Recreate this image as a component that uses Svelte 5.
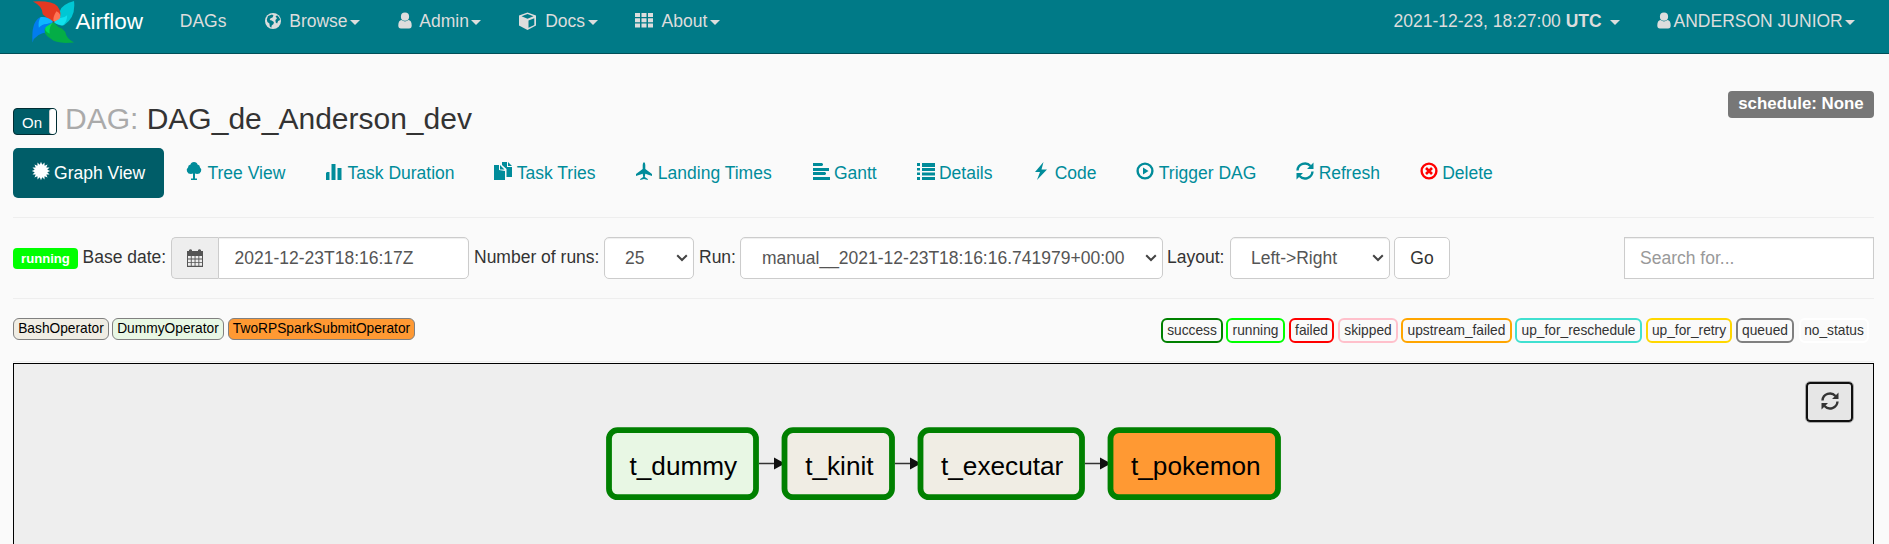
<script>
  const icons = {
    globe: '<circle cx="9" cy="9" r="8"/><path fill="#007a87" d="M4 4l4-1.500 1.500 1-1 2-2 .8-.8 1.700 2 .5 2.200 1.500-.4 2-1.800 1.500-.4 2.200-1.500-1.200-.4-3-2-1.500-.6-2.500zM11.500 4l2-.5 2 2.500.6 2-2 1-1 2.500-1.400-1-.3-2.500 1.500-1.500z"/>',
    user: '<circle cx="7" cy="4.700" r="4.100"/><path d="M3.600 8q3.400 2.800 6.800 0 3.300.2 3.300 5.500 0 3-2.600 3H2.900q-2.600 0-2.600-3 0-5.300 3.300-5.500z"/>',
    cube: '<path fill-rule="evenodd" d="M8.500.5l8.500 3v10L8.500 18 0 13.500v-10zM8.500 2L2.500 4.300l6 2.400 6-2.400zM9.500 8.500v7.300l5.800-2.900V6.200z"/>',
    th: '<path d="M0 1h5v4H0zM6.500 1h5v4h-5zM13 1h5v4h-5zM0 6.300h5v4H0zM6.500 6.300h5v4h-5zM13 6.300h5v4h-5zM0 11.600h5v4H0zM6.500 11.600h5v4h-5zM13 11.600h5v4h-5z"/>',
    tree: '<path d="M9 0q3 0 3.500 2.500Q15 3 15 5.500 17 7 16 9.500 15 12 12 12l-2-.5V16.500h2V18H6v-1.500h2v-5L6 12Q3 12 2 9.500 1 7 3 5.500 3 3 5.500 2.500 6 0 9 0z"/>',
    bars: '<path d="M1 11l1-1h2.500v8H1zM6.500 2h4v16h-4zM12.500 6h4v12h-4z"/>',
    copy: '<path d="M0 3h5v5l6 1v9H0zM6 3l4.500 4.500H6zM8 0h5v5h5v10h-5.500V7L8 3zM14 0l4 4h-4z"/>',
    plane: '<path d="M9 0q1.300 1 1.300 3v4L17 12v2l-6.700-2.300-.5 3.300 3 2v1L9 17l-3.800 1v-1l3-2-.5-3.300L1 14v-2l6.700-5V3Q7.700 1 9 0z"/>',
    gantt: '<path d="M1 1h9l1 1v1l-1 1H1zM1 6h16v3H1zM1 10h12l1 1v1l-1 1H1zM1 15h17v3H1z"/>',
    list: '<path d="M0 1h3v3H0zM5 1h13v4H5zM0 6h3v2.500H0zM5 6h13v3H5zM0 10.500h3V13H0zM5 10.500h13v3H5zM0 15h3v3H0zM5 15h13v3H5z"/>',
    flash: '<path d="M11.500 0L3 10h5L5 18l10-10.500H9.500z"/>',
    play: '<circle cx="9" cy="9" r="7.400" fill="none" stroke="currentColor" stroke-width="2.400"/><path d="M7 5.500L12.500 9 7 12.500z"/>',
    refresh: '<path fill="none" stroke="currentColor" stroke-width="2.400" d="M1.500 8.500A7.500 7.500 0 0 1 14.500 4M16.500 9.500A7.500 7.500 0 0 1 3.500 14"/><path d="M17.500.5V7H11zM.5 17.500V11H7z"/>',
    remove: '<circle cx="9" cy="9" r="7.400" fill="none" stroke="currentColor" stroke-width="2.400"/><path fill="none" stroke="currentColor" stroke-width="2.600" d="M6 6l6 6M12 6l-6 6"/>',
    calendar: '<path fill-rule="evenodd" d="M1 2h2V1q1.500-1.500 3 0v1h6V1q1.500-1.500 3 0v1h2v16H1zM2 7v2.500h2.800V7zm3.700 0v2.500h2.900V7zm3.800 0v2.500h2.900V7zm3.800 0v2.500H16V7zM2 10.400v2.500h2.800v-2.500zm3.700 0v2.500h2.900v-2.500zm3.800 0v2.500h2.900v-2.500zm3.800 0v2.500H16v-2.500zM2 13.800v3h2.800v-3zm3.700 0v3h2.900v-3zm3.800 0v3h2.900v-3zm3.800 0v3H16v-3z"/>'
  };
  const spikes = Array.from({ length: 32 }, (_, i) => {
    const r = i % 2 ? 6.4 : 9.2;
    const a = (i * Math.PI) / 16;
    return `${(9 + r * Math.sin(a)).toFixed(2)},${(9 - r * Math.cos(a)).toFixed(2)}`;
  }).join(' ');
  icons.burst = `<polygon points="${spikes}"/>`;

  const menu = [
    { label: 'Browse', icon: 'globe', w: 25.3 },
    { label: 'Admin', icon: 'user', w: 21.7 },
    { label: 'Docs', icon: 'cube', w: 26.3 },
    { label: 'About', icon: 'th', w: 26.5 }
  ];
  const tabs = [
    ['burst', 'Graph View'], ['tree', 'Tree View'], ['bars', 'Task Duration'], ['copy', 'Task Tries'],
    ['plane', 'Landing Times'], ['gantt', 'Gantt'], ['list', 'Details'], ['flash', 'Code'],
    ['play', 'Trigger DAG'], ['refresh', 'Refresh'], ['remove', 'Delete']
  ];
  const operators = [
    ['BashOperator', '#f0ede4', 96], ['DummyOperator', '#e8f7e4', 112], ['TwoRPSparkSubmitOperator', '#ff9933', 187]
  ];
  const states = [
    ['success', 'green', 62, 3], ['running', 'lime', 59, 4], ['failed', 'red', 45, 4], ['skipped', 'pink', 60, 3],
    ['upstream_failed', 'orange', 111, 3], ['up_for_reschedule', 'turquoise', 127, 4],
    ['up_for_retry', 'gold', 86, 4], ['queued', 'gray', 58, 5], ['no_status', 'white', 70, 0]
  ];
  const nodes = [
    { id: 't_dummy', x: 609, w: 147, tx: 629.5, fill: '#e8f7e4' },
    { id: 't_kinit', x: 784.5, w: 107.5, tx: 805.2, fill: '#f0ede4' },
    { id: 't_executar', x: 920.5, w: 161.5, tx: 941, fill: '#f0ede4' },
    { id: 't_pokemon', x: 1110.5, w: 167.5, tx: 1131, fill: '#ff9933' }
  ];
  const edges = [[759, 774], [895, 910], [1085, 1100]];
</script>

{#snippet icon(name)}
  <svg class="icon" viewBox="0 0 18 18" aria-hidden="true">{@html icons[name]}</svg>
{/snippet}

{#snippet chevron()}
  <svg class="chevron" viewBox="0 0 12 8" aria-hidden="true"><path d="M1.200 1.200L6 6l4.800-4.800" /></svg>
{/snippet}

<nav>
  <a class="brand" href="#home">
    <svg class="logo" viewBox="0 0 44 44" aria-hidden="true">
      <path fill="#00c7d4" d="M43 .5Q31 4 29 10l-7 12q7 5 11 3Q45 17 43 .5z" />
      <path fill="#11e1ee" d="M22 22q1-4 7-4 5-1 7-3 0 6-4 10-5 1-10-3z" />
      <path fill="#e43921" d="M1 1q20-1 25 5 5 7 2 12l-6 4Q15 18 11 14q0-8-10-13z" />
      <path fill="#ff7557" d="M25 11q6 3 3 8l-6 3q-1-5 3-11z" />
      <path fill="#017cee" d="M.5 43Q-1 21 9 17l13 5q-4 5-5 10Q3 34 .5 43z" />
      <path fill="#0cb6ff" d="M9 17q7-1 13 5l-7 2q-5 0-8 4-1-7 2-11z" />
      <path fill="#04ad46" d="M43 43Q25 45 19 39q-7-4-6-10l9-7 5 5q4 1 7 5 1 7 9 11z" />
      <path fill="#00dd5b" d="M22 22q-5 5-4 12-6-3-4-7z" />
      <circle cx="22" cy="22" r="1" fill="#50545b" />
    </svg>
    <span>Airflow</span>
  </a>
  <a class="item" href="#dags">DAGs</a>
  {#each menu as m}
    <a class="item" href="#menu"><span class="slot" style:width="{m.w}px">{@render icon(m.icon)}</span>{m.label}<i class="caret"></i></a>
  {/each}
  <div class="account">
    <a class="item" href="#tz">2021-12-23, 18:27:00&nbsp;<b>UTC</b>&nbsp;<i class="caret zone"></i></a>
    <a class="item" href="#user"><span class="slot small">{@render icon('user')}</span>ANDERSON JUNIOR<i class="caret"></i></a>
  </div>
</nav>

<main>
  <header>
    <h3><span class="toggle"><span>On</span><i></i></span><span class="muted">DAG:</span> DAG_de_Anderson_dev</h3>
    <span class="schedule">schedule: None</span>
  </header>

  <ul class="tabs">
    {#each tabs as [name, label], i}
      <li><a href="#tab" class:active={i === 0}><span class="glyph" class:danger={name === 'remove'}>{@render icon(name)}</span>{label}</a></li>
    {/each}
  </ul>

  <form>
    <span class="running">running</span>
    <span class="l1">Base date:</span>
    <div class="group"><span class="addon">{@render icon('calendar')}</span><div class="value">2021-12-23T18:16:17Z</div></div>
    <span class="l2">Number of runs:</span>
    <div class="select s1">25{@render chevron()}</div>
    <span class="l3">Run:</span>
    <div class="select s2">manual__2021-12-23T18:16:16.741979+00:00{@render chevron()}</div>
    <span class="l4">Layout:</span>
    <div class="select s3">Left-&gt;Right{@render chevron()}</div>
    <button class="go" type="button">Go</button>
    <div class="search">Search for...</div>
  </form>

  <section class="legend">
    <div class="ops">
      {#each operators as [name, color, width]}
        <span class="op" style:background={color} style:width="{width}px">{name}</span>
      {/each}
    </div>
    <div class="states">
      {#each states as [name, color, width, gap]}
        <span class="state" style:border-color={color} style:width="{width}px" style:margin-right="{gap}px">{name}</span>
      {/each}
    </div>
  </section>

  <div class="graph">
    <svg class="canvas" viewBox="14 364 1859 180">
      {#each edges as [from, to]}
        <path d="M{from} 463.500H{to}" stroke="#333" stroke-width="1.500" />
        <path d="M{to} 457.500L{to + 11} 463.500L{to} 469.500z" fill="#111" />
      {/each}
      {#each nodes as n}
        <rect x={n.x} y="430.200" width={n.w} height="67" rx="8.500" fill={n.fill} stroke="green" stroke-width="5.800" />
        <text x={n.tx} y="475">{n.id}</text>
      {/each}
    </svg>
    <button class="reload" type="button" aria-label="Refresh">{@render icon('refresh')}</button>
  </div>
</main>

<style>
  :global(body) {
    background: #fafafa;
    color: #333;
    font: 17.5px/25px "Liberation Sans", Arial, sans-serif;
    overflow: hidden;
  }
  a { color: inherit; text-decoration: none; }
  .icon { width: 18px; height: 18px; fill: currentColor; display: block; flex: none; overflow: visible; }
  nav {
    box-sizing: border-box;
    height: 54px;
    padding: 9px 15px 0 32px;
    display: flex;
    align-items: flex-start;
    background: #007a87;
    border-bottom: 1px solid #004f58;
    color: #ddd;
  }
  .brand { display: flex; width: 129px; color: #fff; font-size: 22.5px; }
  .logo { width: 43px; height: 44px; margin-top: -9px; margin-right: .6px; flex: none; }
  .item { display: flex; align-items: center; padding: 0 18.75px; height: 25px; white-space: nowrap; }
  .slot { display: block; flex: none; }
  .slot .icon { transform: translateY(-1px); }
  .small { width: 16.500px; }
  .caret { border: 5px solid transparent; border-top-color: currentColor; border-bottom: 0; margin: 2px 0 0 2.500px; }
  .zone { margin-left: 3px; }
  .account { display: flex; margin-left: auto; }
  main { padding: 0 15px 0 13px; }
  header { height: 94px; display: flex; justify-content: space-between; }
  h3 { margin: 48px 0 0; display: flex; font-size: 30px; line-height: 33px; font-weight: 400; white-space: pre; }
  .toggle {
    box-sizing: border-box; width: 44px; height: 27px; margin: 6px 8px 0 0;
    border: 1.500px solid #012d33; border-radius: 4px; background: #005d68;
    display: flex; justify-content: space-between; color: #fff; font-size: 15px; line-height: 27px;
  }
  .toggle span { padding-left: 8px; }
  .toggle i { width: 6px; background: #fff; border-left: 1px solid #ccc; border-radius: 3px; }
  .muted { color: #aaa; }
  .schedule {
    box-sizing: border-box; width: 146px; height: 27px; margin-top: 37px; border-radius: 4px;
    background: #777; color: #fff; text-align: center; font-size: 16.875px; line-height: 25px; font-weight: 700;
  }
  .tabs { display: flex; gap: 2.400px; height: 69px; margin: 0; padding: 0; list-style: none; border-bottom: 1px solid #eee; }
  .tabs a { display: flex; padding: 12.500px 18.750px; border-radius: 5px; color: #008c9a; white-space: nowrap; }
  .tabs .active { background: #005d68; color: #fff; }
  .glyph { width: 22.360px; margin-top: 1px; }
  .danger { color: #f00; }
  form { display: flex; align-items: center; height: 80px; border-bottom: 1px solid #eee; white-space: nowrap; }
  form > * { flex: none; }
  .l1, .l2, .l3, .l4 { margin-top: -1px; }
  .running { width: 65px; height: 21px; margin-top: 1px; border-radius: 4px; background: lime; color: #fff; font-size: 13.125px; line-height: 22px; font-weight: 700; text-align: center; }
  .l1 { width: 88px; margin-left: 4.500px; }
  .group { display: flex; width: 298px; margin-left: .5px; }
  .addon, .value, .select, .go, .search { box-sizing: border-box; height: 42px; border: 1px solid #ccc; color: #555; background: #fff; line-height: 41px; }
  .addon { width: 47px; display: grid; place-items: center; border-right: 0; border-radius: 5px 0 0 5px; background: #eee; }
  .value { flex: 1; padding-left: 15.500px; border-radius: 0 5px 5px 0; box-shadow: inset 0 1px 1px #0001; }
  .l2 { width: 130px; margin-left: 5px; }
  .select { display: flex; align-items: center; justify-content: space-between; border-radius: 5px; padding: 0 5px 0 20px; box-shadow: inset 0 1px 1px #0001; }
  .chevron { width: 12px; height: 8px; fill: none; stroke: #444; stroke-width: 2; }
  .s1 { width: 90px; }
  .l3 { width: 41px; margin-left: 5px; }
  .s2 { width: 423px; padding-left: 21px; }
  .l4 { width: 63px; margin-left: 4px; }
  .s3 { width: 160px; }
  .go { width: 56px; margin-left: 4px; padding: 0; border-radius: 5px; color: #333; font: inherit; line-height: 40px; }
  .search { width: 250px; margin-left: auto; padding-left: 15px; color: #999; box-shadow: inset 0 1px 1px #0001; }
  .legend { box-sizing: border-box; height: 63px; padding-top: 19px; border-bottom: 1px solid #eee; margin-bottom: 1px; display: flex; justify-content: space-between; font-size: 13.75px; white-space: nowrap; }
  .ops { display: flex; gap: 3.500px; color: #000; }
  .op { box-sizing: border-box; height: 22px; border: 1px solid #808080; border-radius: 6px; text-align: center; line-height: 20px; }
  .op:nth-child(2) { margin-left: -.5px; margin-right: .5px; }
  .states { display: flex; padding-right: 5px; }
  .state { box-sizing: border-box; height: 25px; border: 2px solid; border-radius: 6px; text-align: center; line-height: 21px; }
  .graph { box-sizing: border-box; height: 182px; position: relative; border: 1px solid #000; background: #eee; }
  .canvas { display: block; width: 1859px; height: 180px; }
  .canvas text { font-size: 26.200px; fill: #000; }
  .reload {
    box-sizing: border-box; position: absolute; top: 18px; right: 20px; width: 47px; height: 40px;
    border: 2px solid #101010; border-radius: 4px; background: #e6e6e6; outline: 1px solid #aaa;
    display: grid; place-items: center; padding: 0 0 3px; color: #333;
  }
</style>
